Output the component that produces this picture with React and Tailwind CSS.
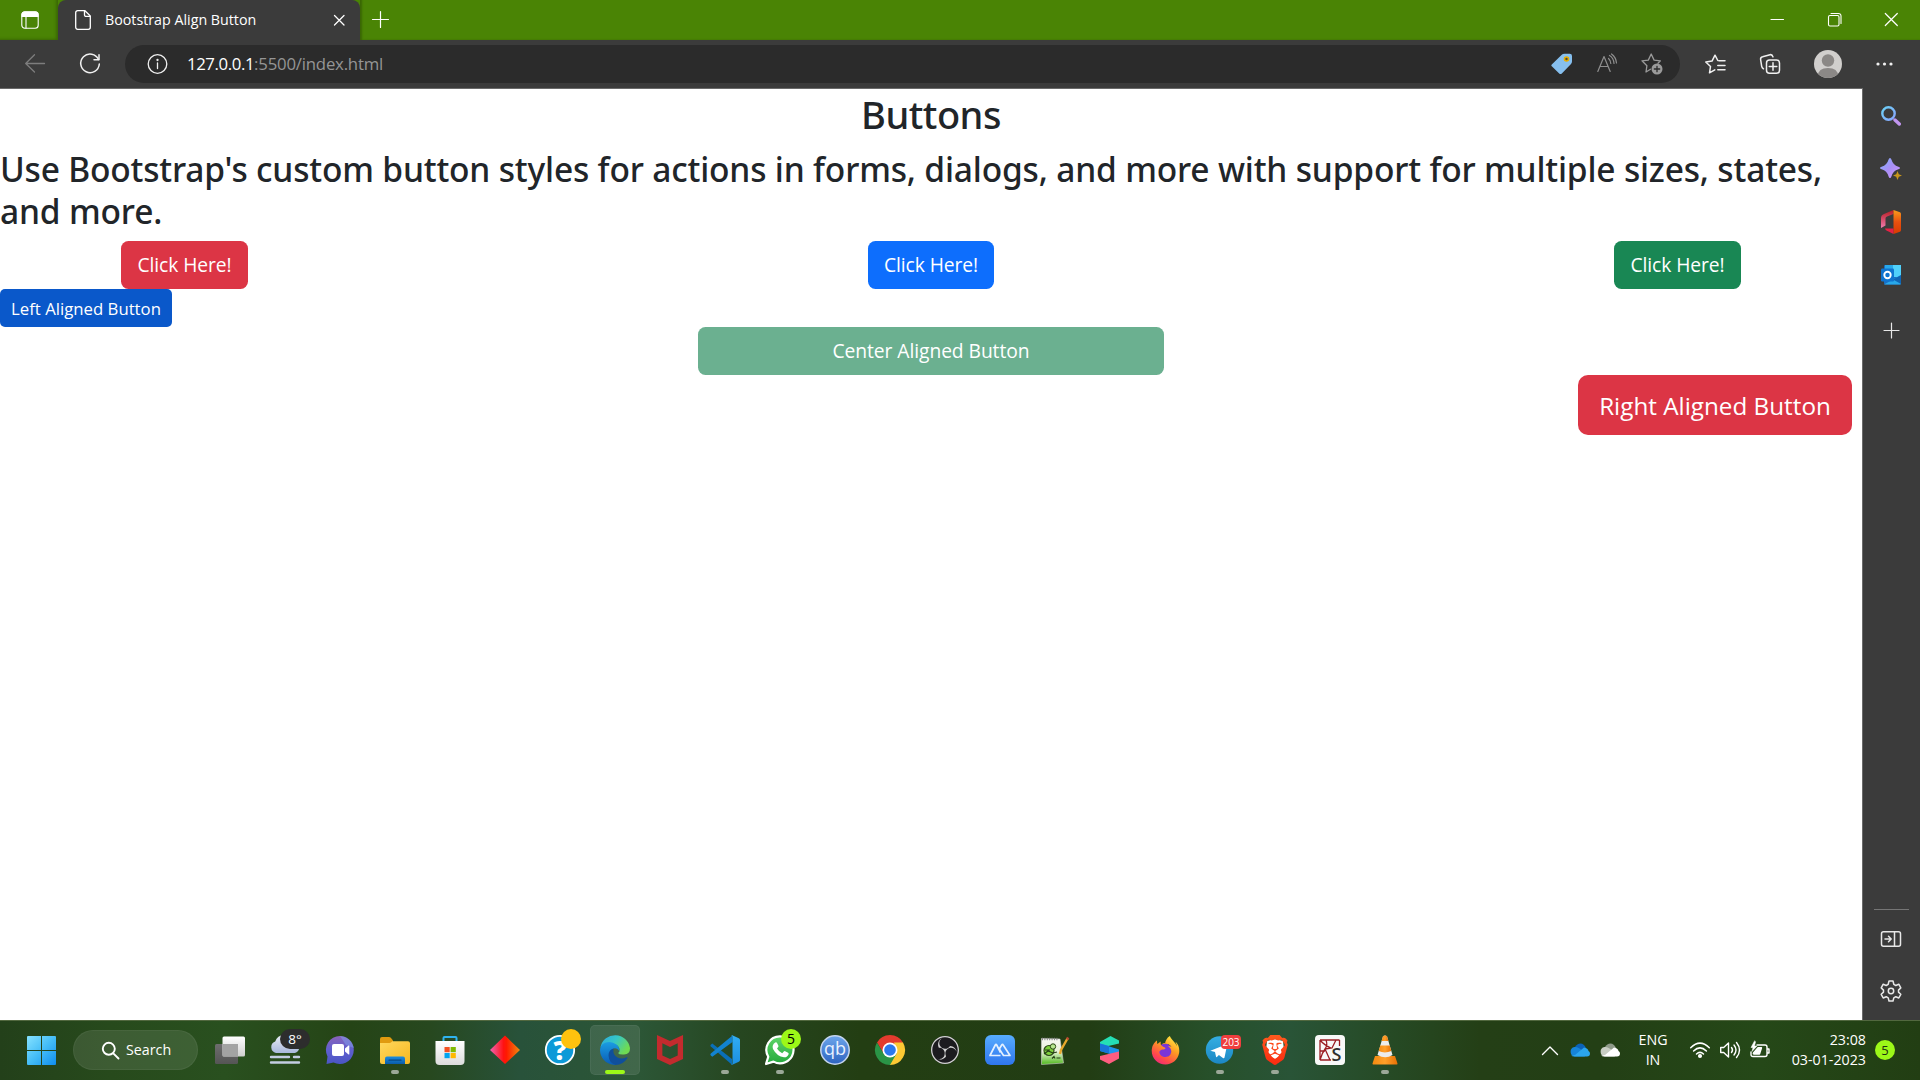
import React from "react";
import { SiObsstudio, SiBrave, SiMcafee } from "react-icons/si";
import { FaFirefoxBrowser } from "react-icons/fa";

function Line({ w = 20, h = w, sw = 1.2, className = "", children }) {
  return (
    <svg
      width={w}
      height={h}
      viewBox={`0 0 ${w} ${h}`}
      fill="none"
      stroke="currentColor"
      strokeWidth={sw}
      strokeLinecap="round"
      strokeLinejoin="round"
      className={`block shrink-0 overflow-visible ${className}`}
    >
      {children}
    </svg>
  );
}

function Art({ children }) {
  return (
    <svg width="30" height="30" viewBox="0 0 30 30" className="block shrink-0 overflow-visible">
      {children}
    </svg>
  );
}

function Grad({ id, from, to, mid, x1 = 0, y1 = 0, x2 = 0, y2 = 1 }) {
  return (
    <linearGradient id={id} x1={x1} y1={y1} x2={x2} y2={y2}>
      <stop offset="0" stopColor={from} />
      {mid && <stop offset="0.5" stopColor={mid} />}
      <stop offset="1" stopColor={to} />
    </linearGradient>
  );
}

/* ---------- Browser chrome ---------- */

function TitleBar() {
  return (
    <div className="flex h-10 items-stretch bg-[#4a8405] text-white">
      <div className="flex w-[58px] items-center pl-[21px] shadow-[inset_-3px_-2px_3px_-1px_rgba(0,0,0,0.22)]">
        <Line w={18} sw={1.1}>
          <rect x="0.8" y="0.8" width="16.4" height="16.4" rx="3" />
          <path d="M1 3.5a2.5 2.5 0 0 1 2.5-2.5h11a2.5 2.5 0 0 1 2.5 2.5v2H1z" fill="currentColor" />
          <path d="M5 5v12" />
        </Line>
      </div>
      <div className="flex w-[302px] items-center rounded-t-[8px] bg-[#3b3b3b] pl-[17px] pr-4">
        <Line w={16} h={20} sw={1.3}>
          <path d="M2.7 0.7h7.3l5.3 5.3v11.3a2 2 0 0 1-2 2H2.7a2 2 0 0 1-2-2v-14.6a2 2 0 0 1 2-2z" />
          <path d="M9.5 0.9v4a1.5 1.5 0 0 0 1.5 1.5h4" />
        </Line>
        <span className="ml-[14px] flex-1 whitespace-nowrap text-[14.25px] leading-5">Bootstrap Align Button</span>
        <Line w={10} sw={1.3}>
          <path d="M0.5 0.5l9.5 9.5M10 0.5L0.5 10" />
        </Line>
      </div>
      <div className="flex flex-1 items-center justify-between pb-px pl-3 pr-[22px] shadow-[inset_3px_-1px_2px_-1px_rgba(0,0,0,0.22)]">
        <Line w={17} sw={1.2}>
          <path d="M0.5 8.5h16M8.5 0.5v16" />
        </Line>
        <div className="flex items-center gap-[44px]">
          <Line w={13} sw={1.1}>
            <path d="M0 6.5h12.5" />
          </Line>
          <Line w={13} sw={1.1}>
            <rect x="0.5" y="2.5" width="10.5" height="10.5" rx="1.5" />
            <path d="M3 0.5h7.5a2.5 2.5 0 0 1 2.5 2.5v7.5" />
          </Line>
          <Line w={13} sw={1.2}>
            <path d="M0.3 0.5l12 12M12.3 0.5l-12 12" />
          </Line>
        </div>
      </div>
    </div>
  );
}

function Toolbar() {
  return (
    <div className="flex h-12 items-center bg-[#3b3b3b] pl-[25px] text-[#f0f0f0]">
      <Line w={20} sw={1.3} className="text-[#7d7d7d]">
        <path d="M19.5 9.5H0.7M9.5 0.8L0.7 9.5l8.8 8.5" />
      </Line>
      <Line w={20} sw={1.5} className="ml-[35px]">
        <path d="M18.5 5.5A9.3 9.3 0 1 0 19.3 10" />
        <path d="M19 0.8v5h-5" />
      </Line>
      <div className="ml-[25px] flex h-[38px] w-[1555px] items-center rounded-full bg-[#2b2b2b] pl-[22px] pr-[17px]">
        <Line w={20} sw={1.3}>
          <circle cx="10.5" cy="10" r="9.3" />
          <path d="M10.5 9v5.5" />
          <circle cx="10.5" cy="6" r="0.5" fill="currentColor" />
        </Line>
        <div className="ml-5 flex flex-1 text-[16.75px] leading-6">
          <span className="tracking-[-0.4px] text-white">127.0.0.1</span>
          <span className="tracking-[-0.2px] text-[#959595]">:5500/index.html</span>
        </div>
        <svg width="22" height="22" viewBox="0 0 22 22">
          <path d="M0.8 11.5L10.500 2q1.300-1.200 3-1.200h5.300q2.200 0 2.200 2.200v5.500q0 1.500-1.200 2.800l-9 9.200q-1.300 1.200-2.600 0l-7.400-7.200q-0.900-0.900 0-1.800z" fill="#86bfee" />
          <circle cx="15.500" cy="6" r="2" fill="#4b4a3a" stroke="#e8ad00" strokeWidth="1.600" />
        </svg>
        <Line w={20} sw={1.2} className="ml-[24px] text-[#8e8e8e]">
          <path d="M0.8 17.5L7 2.5l6.2 15M2.8 12.5h8.4" />
          <path d="M11.5 4.5q2.200 1.800 2.300 5M12.500 1.500q4.200 2.500 4.500 8M14.500 0q4.500 3.200 5 9" />
        </Line>
        <Line w={22} sw={1.3} className="ml-[24px] text-[#9a9a9a]">
          <path d="M9.500 16.200L5 19l0.900-6.300L1 7.800l6.300-0.700L10.200 1l2.900 6.100 6.300 0.700-2.400 2.400" />
          <circle cx="16" cy="16" r="5.500" fill="currentColor" stroke="none" />
          <path d="M16 13.300v5.400M13.300 16h5.400" stroke="#2b2b2b" />
        </Line>
      </div>
      <Line w={21} sw={1.5} className="ml-[24.500px]">
        <path d="M9.800 15.800L4.500 18.800l1-6.300L0.800 8l6.200-0.900L10 1.200l2.800 5.300M14 6.800h6M12.800 11.500h7.200M12.800 15.800h7.200" />
      </Line>
      <Line w={20} sw={1.5} className="ml-[34px]">
        <path d="M3.500 14.800q-1.500-1-1.800-2.500L0.600 5.500q-0.300-2.300 2-2.800L10 0.700q2.200-0.500 3 2.200" />
        <rect x="6.500" y="6" width="13" height="13.200" rx="3" />
        <path d="M13 8.800v7.500M9.200 12.600h7.600" />
      </Line>
      <svg width="28" height="28" viewBox="0 0 28 28" className="ml-[34px]">
        <clipPath id="avatar"><circle cx="14" cy="14" r="14" /></clipPath>
        <g clipPath="url(#avatar)">
          <rect width="28" height="28" fill="#d1cfcd" />
          <circle cx="14" cy="10.500" r="6.200" fill="#8b8886" />
          <path d="M4 26q0-8 10-8t10 8v4H4z" fill="#8b8886" />
        </g>
      </svg>
      <svg width="17" height="4" viewBox="0 0 17 4" className="ml-[34px]" fill="#f0f0f0">
        <circle cx="2" cy="2" r="1.600" /><circle cx="8.500" cy="2" r="1.600" /><circle cx="15" cy="2" r="1.600" />
      </svg>
    </div>
  );
}

/* ---------- Page ---------- */

function PageContent() {
  return (
    <main className="flex w-[1862px] flex-col bg-white text-[#212529]">
      <h2 className="mb-[9px] pt-px text-center font-['Noto_Sans',sans-serif] text-[38px] font-medium leading-[48px] tracking-[-0.5px]">
        Buttons
      </h2>
      <h3 className="mb-[9px] pt-px font-['Noto_Sans',sans-serif] text-[33.5px] font-medium leading-[42px] tracking-[-0.17px]">
        Use Bootstrap's custom button styles for actions in forms, dialogs, and more with support for multiple sizes, states, and more.
      </h3>
      <div className="flex justify-between text-[19.25px] tracking-[-0.1px] text-white">
        <div className="flex w-[369px] justify-center">
          <button className="h-12 w-[127px] rounded-[7.5px] bg-[#dc3545] pt-px">Click Here!</button>
        </div>
        <div className="flex w-[369px] justify-center">
          <button className="h-12 w-[126px] rounded-[7.5px] bg-[#0d6efd] pt-px">Click Here!</button>
        </div>
        <div className="flex w-[369px] justify-center">
          <button className="h-12 w-[127px] rounded-[7.5px] bg-[#198754] pt-px">Click Here!</button>
        </div>
      </div>
      <button className="h-[38px] w-[172px] rounded-[5px] bg-[#0a58ca] pt-0.5 text-[16.75px] text-white">Left Aligned Button</button>
      <button className="h-12 w-[466px] self-center rounded-[7.5px] bg-[#6bb090] pt-px text-[19.25px] tracking-[-0.07px] text-white">Center Aligned Button</button>
      <button className="mr-2.5 h-[60px] w-[274px] self-end rounded-[10px] bg-[#dc3545] pt-0.5 text-[24.25px] text-white">Right Aligned Button</button>
    </main>
  );
}

function SideCell({ children }) {
  return <div className="flex h-[53px] shrink-0 items-center justify-center">{children}</div>;
}

function Sidebar() {
  return (
    <aside className="flex flex-1 flex-col border-l border-[#6a6a6a] bg-[#3b3b3b] pr-px pt-px text-[#e8e8e8]">
      <SideCell>
        <svg width="20" height="20" viewBox="0 0 20 20">
          <defs>
            <Grad id="mag" from="#6ad0f5" to="#8aa5ff" x2={1} />
          </defs>
          <circle cx="7.500" cy="7.500" r="6.200" fill="none" stroke="url(#mag)" strokeWidth="2.400" />
          <path d="M14 14l4.300 4" stroke="#c195ef" strokeWidth="3.400" strokeLinecap="round" />
        </svg>
      </SideCell>
      <SideCell>
        <svg width="22" height="22" viewBox="0 0 22 22">
          <defs>
            <Grad id="spark" from="#7fb4ff" mid="#a98ef5" to="#cf9bff" x2={1} />
          </defs>
          <path d="M10 0q1 0 1.400 1.500 1.600 5.600 7 7.200 1.600 0.500 1.600 1.300t-1.600 1.300q-5.400 1.600-7 7.200Q11 20 10 20t-1.400-1.500q-1.600-5.600-7-7.200Q0 10.800 0 10t1.600-1.300q5.400-1.600 7-7.200Q9 0 10 0z" fill="url(#spark)" />
          <path d="M17.500 13l1.300 3.200L22 17.500l-3.200 1.300L17.500 22l-1.300-3.200-3.200-1.300 3.200-1.300z" fill="#c8961c" />
        </svg>
      </SideCell>
      <SideCell>
        <svg width="20" height="24" viewBox="0 0 20 24">
          <defs>
            <Grad id="offL" from="#b81c22" to="#ee7bae" />
            <Grad id="offR" from="#f99d1c" mid="#e8500f" to="#d83b01" />
          </defs>
          <path d="M12.500 0L3 4Q0 5.200 0 8v10l4.500-2.500V8.500q0-1.500 1.500-2l6.500-2.500z" fill="url(#offL)" />
          <path d="M12.500 0L19 2.200q1 0.500 1 1.800v16q0 1.300-1 1.800L12.500 24z" fill="url(#offR)" />
          <path d="M4 18.500h8.500V24L5.500 20.500q-1.500-0.800-1.500-2z" fill="#e52145" />
        </svg>
      </SideCell>
      <SideCell>
        <svg width="20" height="20" viewBox="0 0 20 20">
          <rect x="3" width="17" height="19.500" rx="1" fill="#1a6fc4" />
          <rect x="4" y="0" width="8" height="6" fill="#28a8ea" />
          <rect x="12" y="0" width="8" height="12" fill="#50d0fa" />
          <path d="M3 19.500L20 10v8.500a1 1 0 0 1-1 1z" fill="#28a8ea" />
          <path d="M20 10v9l-8-4.500z" fill="#1066b5" />
          <rect y="3.500" width="13" height="13" rx="1.200" fill="#0f74cf" />
          <circle cx="6.500" cy="10" r="3.200" fill="none" stroke="#fff" strokeWidth="1.900" />
        </svg>
      </SideCell>
      <div className="flex h-[59px] items-center justify-center">
        <Line w={15} sw={1.2}><path d="M0 7.500h15M7.500 0v15" /></Line>
      </div>
      <div className="flex-1" />
      <div className="mx-auto h-px w-[35px] bg-[#757575]" />
      <div className="flex h-[58px] items-center justify-center">
        <Line w={20} h={16} sw={1.5}>
          <rect x="0.500" y="0.700" width="19" height="14.500" rx="2" />
          <path d="M13.500 1v14M4 8h6M7.500 5.300L10.200 8l-2.700 2.700" />
        </Line>
      </div>
      <div className="flex h-[52px] items-start justify-center pt-3">
        <Line w={20} h={22} sw={1.5}>
          <path d="M8 1h4l0.800 3.300 2 1.200 3-1.300 2 3.700-2.300 2.200v2l2.300 2.200-2 3.700-3-1.300-2 1.200L12 21H8l-0.800-3.100-2-1.200-3 1.300-2-3.700 2.300-2.200v-2L0.200 7.900l2-3.700 3 1.300 2-1.200z" />
          <circle cx="10" cy="11" r="2.700" />
        </Line>
      </div>
    </aside>
  );
}

/* ---------- Taskbar icons ---------- */

function TaskView() {
  return (
    <Art>
      <defs>
        <Grad id="tv1" from="#ffffff" to="#cfcfcf" />
        <Grad id="tv2" from="#6d6d6d" to="#555555" />
      </defs>
      <rect x="0" y="9" width="23" height="20" rx="1.500" fill="url(#tv2)" />
      <rect x="7.500" y="1.500" width="22.500" height="20" rx="1.500" fill="url(#tv1)" />
      <path d="M7.500 9H23v12.500H8.500a1 1 0 0 1-1-1z" fill="#a3a3a3" />
    </Art>
  );
}

function Weather() {
  return (
    <div className="relative">
      <Art>
        <defs><Grad id="wea" from="#e9edf5" to="#a9b9dc" /></defs>
        <path d="M6 18a6 6 0 0 1-0.800-11.500A9.500 9.500 0 0 1 23 6a6.200 6.200 0 0 1 2 12z" fill="url(#wea)" />
        <path d="M1 22h18M24 22h5M1 27.500h28" stroke="#c3cde2" strokeWidth="2.400" strokeLinecap="round" />
      </Art>
      <span className="absolute -top-[6px] left-[10px] flex h-5 w-[30px] items-center justify-center rounded-full bg-[#2d2d2d] text-[13.5px] text-white">8°</span>
    </div>
  );
}

function Chat() {
  return (
    <Art>
      <defs><Grad id="chat" from="#8a62b8" mid="#5f5fd0" to="#4a55c4" /></defs>
      <path d="M15 1a14 14 0 1 1-6.500 26.500L1.500 29l1-7.500A14 14 0 0 1 15 1z" fill="url(#chat)" />
      <path d="M15 1a14 14 0 0 1 13.800 12l-8-3z" fill="#7da0f0" opacity="0.500" />
      <rect x="7" y="9" width="12" height="12" rx="2" fill="#fff" />
      <path d="M20 13.500l3.500-3q0.800-0.300 0.800 0.500v8q0 0.800-0.800 0.500l-3.500-3z" fill="#fff" />
    </Art>
  );
}

function Explorer() {
  return (
    <Art>
      <defs>
        <Grad id="fold" from="#ffd75e" to="#f5b81f" x2={1} />
        <Grad id="foldB" from="#1a8de0" to="#0b5ca8" />
      </defs>
      <path d="M0 4q0-2 2-2h7q1 0 1.800 0.800L13 5.500V12H0z" fill="#e09a10" />
      <path d="M0 8h9.500q1 0 1.800-0.800l1-1H28q2 0 2 2V27q0 2-2 2H2q-2 0-2-2z" fill="url(#fold)" />
      <path d="M5 29v-5.500q0-2 2-2h16q2 0 2 2V29z" fill="url(#foldB)" />
      <path d="M9 25.200h12" stroke="#084a86" strokeWidth="1.200" strokeLinecap="round" />
    </Art>
  );
}

function Store() {
  return (
    <Art>
      <defs><Grad id="store" from="#ffffff" to="#dcdcdc" /></defs>
      <path d="M8.500 7V3q0-1 1-1h11q1 0 1 1v4" fill="none" stroke="#2fb4f0" strokeWidth="2" />
      <path d="M0.500 6h29v20q0 4-4 4h-21q-4 0-4-4z" fill="url(#store)" />
      <rect x="9.500" y="12" width="5.200" height="5.200" fill="#f25022" />
      <rect x="15.600" y="12" width="5.200" height="5.200" fill="#7fba00" />
      <rect x="9.500" y="18" width="5.200" height="5.200" fill="#00a4ef" />
      <rect x="15.600" y="18" width="5.200" height="5.200" fill="#ffb900" />
    </Art>
  );
}

function Diamond() {
  return (
    <Art>
      <defs>
        <linearGradient id="dia">
          <stop offset="0" stopColor="#f064b4" />
          <stop offset="0.450" stopColor="#ff1212" />
          <stop offset="0.550" stopColor="#ff1a00" />
          <stop offset="1" stopColor="#f08a10" />
        </linearGradient>
      </defs>
      <path d="M15 0.500L30 15 15 29 0 15z" fill="url(#dia)" />
    </Art>
  );
}

function Help() {
  return (
    <div className="relative">
      <Art>
        <circle cx="15" cy="15" r="14.200" fill="#0d9ad8" stroke="#fff" strokeWidth="1.800" />
        <text x="15" y="24.500" textAnchor="middle" fontFamily="Open Sans" fontWeight="800" fontSize="26" fill="#fff">?</text>
      </Art>
      <span className="absolute -top-[6px] left-4 h-5 w-5 rounded-full bg-[#ffc20e]" />
    </div>
  );
}

function Edge() {
  return (
    <Art>
      <defs>
        <Grad id="edA" from="#2ba8e0" mid="#35c6c8" to="#6fdb52" x2={1} y2={0.5} />
        <Grad id="edB" from="#1b9de2" to="#0a5bb5" />
      </defs>
      <path d="M0.500 12A15 15 0 0 1 30 13q0.200 6-6 6.500-5 0.300-6-1.500 2-1 1.500-4-1-4.500-7-5Q5 8.500 0.500 12z" fill="url(#edA)" />
      <path d="M0 15q0-5 5-7.300 6.500-2.200 11.500 1.800 3.500 3 2.800 6.500-2-3.500-5.800-2.500-4 1.300-4 6.500 0.500 6 6.500 9.800-1 0.300-2.500 0A15 15 0 0 1 0 15z" fill="url(#edB)" />
      <path d="M13.500 13.500q-5 1.500-5 7 0.500 7.500 7 9.400 7.500 0 12-7 0.300-1-0.700-0.700-5 2.300-9.300 0.300-5-2.500-4-9z" fill="#0f4f9c" />
    </Art>
  );
}

function VSCode() {
  return (
    <Art>
      <defs><Grad id="vsc" from="#31aef5" to="#1c8fe0" /></defs>
      <path d="M2.300 8.500L22 24v5.800L0.800 11.600q-1-1 0-1.900z" fill="#0a6fb8" />
      <path d="M2.300 21.800L22.500 7V0.500L0.800 18.500q-1 1 0 1.900z" fill="#1283cf" />
      <path d="M21 0.800q0.700-0.800 1.800-0.400l6 2.800Q30 3.800 30 5v20q0 1.200-1.200 1.800l-6 2.800q-1.100 0.400-1.800-0.400 1.500 0.500 1.500-1.200V2Q22.500 0.300 21 0.800z" fill="url(#vsc)" />
    </Art>
  );
}

function WhatsApp() {
  return (
    <div className="relative">
      <Art>
        <defs><Grad id="wa" from="#5fd669" to="#24a83c" /></defs>
        <path d="M15.200 1.300a13.500 13.500 0 1 1-6.700 25.300L1 29l2.300-7.300A13.500 13.500 0 0 1 15.200 1.300z" fill="url(#wa)" stroke="#fff" strokeWidth="2.200" strokeLinejoin="round" />
        <path d="M10.200 7.500q1-0.700 1.700 0.300l1.500 3q0.300 0.800-0.400 1.500l-1 1.200q2 3.400 5.200 4.700l1.600-1.800q0.600-0.600 1.400-0.200l2.900 1.500q0.900 0.500 0.500 1.500-1.200 3.300-4.600 3.100-7-0.800-11-8.300-1.400-4 2.200-6.500z" fill="#fff" />
      </Art>
      <span className="absolute -top-[6px] left-4 flex h-5 w-5 items-center justify-center rounded-full bg-[#9cf818] text-[14px] leading-none text-black">5</span>
    </div>
  );
}

function QBittorrent() {
  return (
    <Art>
      <defs><Grad id="qb" from="#6da6ec" to="#2d63c0" /></defs>
      <circle cx="15" cy="15" r="14.200" fill="url(#qb)" stroke="#c5d5ee" strokeWidth="1.500" />
      <text x="15" y="20" textAnchor="middle" fontFamily="Open Sans" fontSize="18" fill="#e9f1ff">qb</text>
    </Art>
  );
}

function Chrome() {
  return (
    <Art>
      <path d="M2 7.500A15 15 0 0 1 28 7.500L27 11H15L8.500 18.500z" fill="#e33b2e" />
      <path d="M28 7.500A15 15 0 0 1 15 30l-1-2.500 7.500-9L19 7.500z" fill="#fcc934" />
      <path d="M2 7.500A15 15 0 0 0 15 30L21.500 18.700 15 22l-6.500-3.500z" fill="#2a9446" />
      <circle cx="15" cy="15" r="7.500" fill="#fff" />
      <circle cx="15" cy="15" r="5.800" fill="#2c78ee" />
    </Art>
  );
}

function Obs() {
  return (
    <div className="flex h-7 w-7 items-center justify-center rounded-full bg-[#1c1b1f] text-[28px] text-[#d3d3d3]">
      <SiObsstudio />
    </div>
  );
}

function Peaks() {
  return (
    <Art>
      <defs><Grad id="mp" from="#57acff" to="#2f76ee" /></defs>
      <rect width="30" height="30" rx="6" fill="url(#mp)" />
      <path d="M15.500 20.500H5L10.300 10q0.700-1.200 1.400 0L15.500 17.500M14 14.500l2.700-4.500q0.800-1.200 1.500 0L25 20.500h-6.500L14 13.500" fill="none" stroke="#e3f0ff" strokeWidth="1.700" strokeLinejoin="round" />
    </Art>
  );
}

function NotepadPP() {
  return (
    <Art>
      <defs><Grad id="npp" from="#f8f8f4" mid="#eaf3da" to="#4db81a" /></defs>
      <path d="M1.500 3.500L20 4l3.500 24-22 1.500z" fill="url(#npp)" stroke="#cfcfcf" strokeWidth="0.600" />
      <path d="M2 4h16" stroke="#888" strokeWidth="2.400" strokeDasharray="1 1.400" />
      <ellipse cx="9" cy="15.500" rx="5" ry="5" fill="#7ed03c" stroke="#2d4a18" strokeWidth="1.200" />
      <circle cx="13" cy="11.500" r="2.700" fill="#b6e68e" stroke="#2d4a18" />
      <path d="M4 19l4-3 5 2 4-1M5 15h5M12 23.500l2-2 1 2M16.500 23h4" fill="none" stroke="#263d16" strokeWidth="1.100" />
      <path d="M27.500 3.500L21 15l-1 4" stroke="#e8a82c" strokeWidth="2.400" fill="none" />
      <path d="M27 4.500l1.200-2" stroke="#b64a32" strokeWidth="2.600" />
    </Art>
  );
}

function Ribbon() {
  return (
    <Art>
      <path d="M5 7L15.500 1 24 5.500v3L5 13z" fill="#25dfb4" />
      <path d="M5 8.500L24 14.500V20l-2 1-17-5z" fill="#1f96ec" />
      <path d="M5 8.500l9 2.500v7.500L5 16z" fill="#1874d8" />
      <path d="M5 21l19-4.500v7L14 29 5 24.500z" fill="#ff5d80" />
    </Art>
  );
}

function Firefox() {
  return (
    <div className="relative flex h-[30px] w-[30px] items-center justify-center">
      <svg width="30" height="30" viewBox="0 0 30 30" className="absolute inset-0">
        <defs>
          <linearGradient id="ffx" x1="0.800" y1="0" x2="0.200" y2="1">
            <stop offset="0" stopColor="#ffee45" />
            <stop offset="0.400" stopColor="#ff9b22" />
            <stop offset="0.750" stopColor="#ff4a4a" />
            <stop offset="1" stopColor="#ee2480" />
          </linearGradient>
        </defs>
        <circle cx="15" cy="15.500" r="7" fill="#7a35d8" />
      </svg>
      <FaFirefoxBrowser className="relative text-[29px] [&>path]:fill-[url(#ffx)]" />
    </div>
  );
}

function Telegram() {
  return (
    <div className="relative">
      <Art>
        <defs><Grad id="tg" from="#34aee2" to="#1c87c4" /></defs>
        <circle cx="14.500" cy="15" r="13.700" fill="url(#tg)" />
        <path d="M6 15.500L21 9.500q1.200-0.300 1 1l-2.500 12q-0.400 1.300-1.600 0.500l-4-3-2 2q-0.700 0.500-0.900-0.500l-1-4.500-3.800-1.100q-1-0.500-0.200-0.900z" fill="#fff" />
      </Art>
      <span className="absolute left-4 top-0 flex h-[14px] w-5 items-center justify-center rounded-[4px] bg-[#ef3e3e] text-[10px] leading-none text-white">203</span>
    </div>
  );
}

function Brave() {
  return (
    <div className="relative flex h-[30px] w-[30px] items-center justify-center">
      <svg width="30" height="30" viewBox="0 0 30 30" className="absolute inset-0">
        <defs><Grad id="brv" from="#ff5a1e" to="#fa2a10" /></defs>
        <path d="M7 6l8-2 8 2 1 9-9 11-9-11z" fill="#fff" />
      </svg>
      <SiBrave className="relative text-[30px] [&>path]:fill-[url(#brv)]" />
    </div>
  );
}

function Spyder() {
  return (
    <Art>
      <rect width="30" height="30" rx="4" fill="#f8f8f8" />
      <path d="M5 5h19.500M5 5v20M5 25h11M24.500 5v6M5 5q4 5 11 8M11 5q2 5-1 9T5 25M10 14l7-1 4-8M10 14l5 11M5 16h5" fill="none" stroke="#9b1c22" strokeWidth="1.300" />
      <text x="21.500" y="25.500" textAnchor="middle" fontFamily="Open Sans" fontWeight="600" fontSize="18" fill="#2f2f2f">S</text>
    </Art>
  );
}

function Vlc() {
  return (
    <Art>
      <defs><Grad id="vlc" from="#f58a10" mid="#ffa02a" to="#e87004" x2={1} y2={0} /></defs>
      <path d="M5 21h20l2.500 7.500q0.200 1-0.800 1H3.300q-1 0-0.800-1z" fill="url(#vlc)" />
      <path d="M13 1.200q2-1.200 4 0L22.500 20q-7 4.500-15 0z" fill="#ececec" />
      <path d="M13 1.200q2-1.200 4 0L18.400 6h-6.800z" fill="url(#vlc)" />
      <path d="M10.300 10.500h9.400l1.600 5.500q-6.500 2.800-12.600 0z" fill="url(#vlc)" />
    </Art>
  );
}

const apps = [
  { id: "view", icon: <TaskView /> },
  { id: "weather", icon: <Weather /> },
  { id: "chat", icon: <Chat /> },
  { id: "files", icon: <Explorer />, running: true },
  { id: "store", icon: <Store /> },
  { id: "diamond", icon: <Diamond /> },
  { id: "help", icon: <Help /> },
  { id: "edge", icon: <Edge />, active: true },
  { id: "mcafee", icon: <SiMcafee className="text-[30px] text-[#c32b2e]" /> },
  { id: "code", icon: <VSCode />, running: true },
  { id: "whatsapp", icon: <WhatsApp />, running: true },
  { id: "torrent", icon: <QBittorrent /> },
  { id: "chrome", icon: <Chrome /> },
  { id: "obs", icon: <Obs /> },
  { id: "peaks", icon: <Peaks /> },
  { id: "notepad", icon: <NotepadPP /> },
  { id: "ribbon", icon: <Ribbon /> },
  { id: "firefox", icon: <Firefox /> },
  { id: "telegram", icon: <Telegram />, running: true },
  { id: "brave", icon: <Brave />, running: true },
  { id: "spyder", icon: <Spyder /> },
  { id: "vlc", icon: <Vlc />, running: true },
];

function AppCell({ icon, running, active }) {
  return (
    <div className="flex w-[55px] justify-center">
      <div
        className={
          active
            ? "relative flex h-[50px] w-[50px] items-center justify-center rounded-[5px] bg-white/10 shadow-[inset_0_0_0_1px_rgba(255,255,255,0.05)]"
            : "relative flex h-[50px] w-[50px] items-center justify-center"
        }
      >
        {icon}
        {running && <span className="absolute bottom-px left-[21px] h-1 w-2 rounded-full bg-[#9ba898]" />}
        {active && <span className="absolute bottom-px left-[15px] h-1 w-5 rounded-full bg-[#9cf818]" />}
      </div>
    </div>
  );
}

function Taskbar() {
  return (
    <footer className="flex h-[60px] items-center border-t border-[#52683f] bg-[linear-gradient(90deg,#23401a_0px,#274a1c_110px,#29501f_225px,#254416_350px,#27481f_430px,#28523a_520px,#2c5636_640px,#264620_740px,#233e13_860px,#223d14_1090px,#27502a_1210px,#295437_1290px,#264a25_1390px,#243f16_1480px,#233f15_1600px,#254818_1760px,#223e13_1920px)] pb-px text-[14.25px] text-white">
      <svg width="29" height="29" viewBox="0 0 29 29" className="ml-[27px]">
        <defs><Grad id="win" from="#86e2ff" mid="#45bdf7" to="#0f8dee" x2={1} /></defs>
        <path d="M1 0h13v14H0V1q0-1 1-1zM15 0h13q1 0 1 1v13H15zM0 15h14v14H1q-1 0-1-1zM15 15h14v13q0 1-1 1H15z" fill="url(#win)" />
      </svg>
      <div className="ml-[17px] flex h-10 w-[125px] items-center rounded-full border border-white/5 bg-white/10 pl-[28px]">
        <Line w={17} sw={1.9}>
          <circle cx="6.800" cy="6.800" r="6" />
          <path d="M11.300 11.300l5.200 5.200" />
        </Line>
        <span className="ml-[7px]">Search</span>
      </div>
      <div className="ml-[4.5px] flex">
        {apps.map((a) => (
          <AppCell key={a.id} icon={a.icon} running={a.running} active={a.active} />
        ))}
      </div>
      <div className="ml-auto flex items-center pr-[25px]">
        <Line w={16} h={9} sw={1.4} className="mr-3"><path d="M0.500 8.500L8 1l7.500 7.500" /></Line>
        <svg width="20" height="14" viewBox="0 0 20 14" className="mr-2.5">
          <path d="M5 4Q7 0.500 10.500 0.500T16 5L9 9z" fill="#0b62b8" />
          <path d="M5 13.500A4.800 4.800 0 0 1 4.500 4q3-0.500 5 1.500l8 5-3 3z" fill="#1684d8" />
          <path d="M5 12l9-7.500q4 0.500 4.500 3.500 1.500 0.800 1.500 2.500 0 3-3 3H4.500Q2 13.500 1.200 12.800z" fill="#2ba5ee" />
        </svg>
        <svg width="20" height="14" viewBox="0 0 20 14">
          <path d="M5 4Q7 0.500 10.500 0.500T16 5L9 9z" fill="#8f9a8a" />
          <path d="M5 13.500A4.800 4.800 0 0 1 4.500 4q3-0.500 5 1.500l8 5-3 3z" fill="#c8cdc4" />
          <path d="M5 12l9-7.500q4 0.500 4.500 3.500 1.500 0.800 1.500 2.500 0 3-3 3H4.500Q2 13.500 1.200 12.800z" fill="#ffffff" />
        </svg>
        <div className="ml-[18px] w-[30px] text-center leading-5">
          <div>ENG</div>
          <div>IN</div>
        </div>
        <div className="ml-[22px] flex items-center gap-2.5">
          <Line w={20} h={16} sw={1.5}>
            <path d="M0.700 5.800q9.300-9.300 18.600 0M3.600 9q6.400-6.300 12.800 0M6.500 12q3.500-3.300 7 0" />
            <circle cx="10" cy="14" r="1.300" fill="currentColor" />
          </Line>
          <Line w={20} h={16} sw={1.4}>
            <path d="M0.700 5.500h3L8.500 1v14l-4.800-4.500h-3zM11.500 5.500q2 2.500 0 5M14 3q4 5 0 10M16.500 0.500q6 7.500 0 15" />
          </Line>
          <Line w={20} h={16} sw={1.4}>
            <path d="M7 3h8q2 0 2 2v7.500q0 2-2 2H3q-2 0-2-2V10M17.500 7h1.500v4h-1.500" />
            <path d="M8 5.700l3.500 0L9.500 12H4q-1 0-0.500-1z" fill="currentColor" />
            <path d="M4.500-1L1 5.500h2l-1 4L7 4H4.500L5.500 0z" fill="currentColor" strokeWidth="0.500" />
          </Line>
        </div>
        <div className="ml-[21px] w-[75px] whitespace-nowrap text-right leading-5">
          <div>23:08</div>
          <div>03-01-2023</div>
        </div>
        <span className="ml-[9px] flex h-5 w-5 items-center justify-center rounded-full bg-[#9cf818] text-[13px] leading-none text-[#1c3010]">5</span>
      </div>
    </footer>
  );
}

export default function App() {
  return (
    <div className="flex h-[1080px] w-[1920px] flex-col overflow-hidden font-['Open_Sans',sans-serif]">
      <TitleBar />
      <Toolbar />
      <div className="flex min-h-0 flex-1 bg-[#3b3b3b]">
        <div className="flex flex-col border-t border-[#6a6a6a] bg-white">
          <PageContent />
        </div>
        <Sidebar />
      </div>
      <Taskbar />
    </div>
  );
}
